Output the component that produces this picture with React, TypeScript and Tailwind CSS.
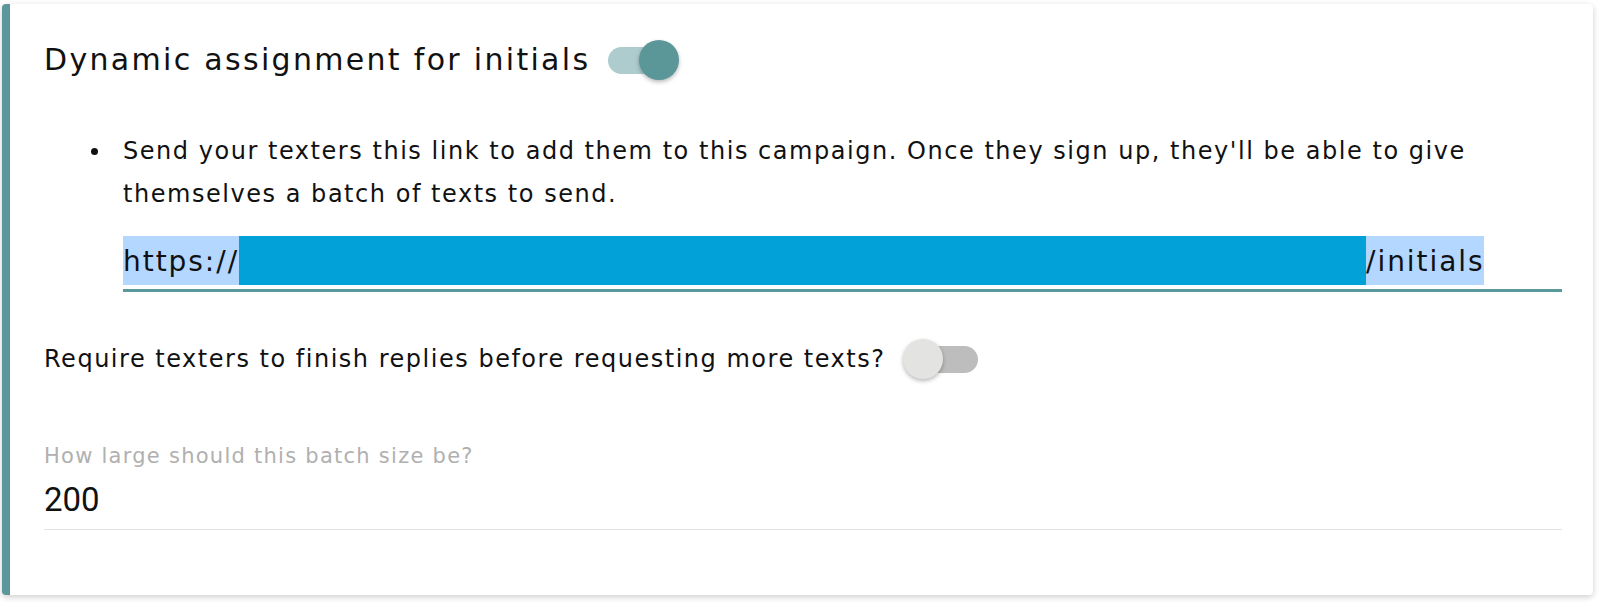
import React from 'react';

function Toggle({ on }: { on: boolean }) {
  return (
    <div className="relative h-[27px] w-[64px] shrink-0">
      <div className={`h-full w-full rounded-full ${on ? 'bg-[#aecbcd]' : 'bg-[#bdbdbd]'}`} />
      <div
        className={`absolute top-1/2 h-[40px] w-[40px] -translate-y-1/2 rounded-full shadow-[0_2px_4px_rgba(0,0,0,0.28)] ${
          on ? 'left-[31px] bg-[#5b9799]' : 'left-[-11px] bg-[#e3e4e2]'
        }`}
      />
    </div>
  );
}

export default function App() {
  return (
    <div className="min-h-screen bg-white pt-[4px] pl-[2px] font-['DejaVu_Sans',sans-serif] text-[#111]">
      <div className="flex h-[591px] w-[1591px] flex-col rounded-[4px] border-l-[8px] border-[#5b979b] bg-white pt-[36px] pl-[34px] pr-[31px] shadow-[0_2px_6px_rgba(0,0,0,0.2)]">
        {/* Title row */}
        <div className="flex h-[40px] items-center">
          <h2 className="text-[30px] leading-[40px] tracking-[0.077em]">Dynamic assignment for initials</h2>
          <div className="ml-[18px]">
            <Toggle on />
          </div>
        </div>

        {/* Link section */}
        <div className="mt-[50px] flex">
          <div className="w-[79px] shrink-0">
            <div className="ml-[47px] mt-[18px] h-[7px] w-[7px] rounded-full bg-[#111]" />
          </div>
          <div className="flex-1">
            <p className="text-[24px] leading-[43px] tracking-[0.064em]">
              Send your texters this link to add them to this campaign. Once they sign up, they'll be able to give
              <br />
              themselves a batch of texts to send.
            </p>
            <div className="mt-[20px] border-b-[3px] border-[#5a9a9c] pb-[4px]">
              <div className="flex h-[49px] items-stretch whitespace-nowrap text-[28px] tracking-[0.07em]">
                <span className="flex w-[116px] shrink-0 items-center pt-[3px] bg-[#b3d7ff]">https://</span>
                <span className="w-[1127px] shrink-0 bg-[#02a2d8]" />
                <span className="flex w-[118px] shrink-0 items-center pt-[3px] bg-[#b3d7ff]">/initials</span>
              </div>
            </div>
          </div>
        </div>

        {/* Require replies row */}
        <div className="mt-[47px] flex h-[40px] items-center">
          <span className="text-[24px] tracking-[0.063em]">Require texters to finish replies before requesting more texts?</span>
          <div className="ml-[29px]">
            <Toggle on={false} />
          </div>
        </div>

        {/* Batch size */}
        <label className="mt-[65px] text-[21px] leading-[24px] tracking-[0.06em] text-[#b0b0b0]">
          How large should this batch size be?
        </label>
        <div className="mt-[14px] border-b border-[#e2e2de] pb-[11px]">
          <div className="flex h-[36px] items-center font-['Roboto',sans-serif] text-[33px]">200</div>
        </div>
      </div>
    </div>
  );
}
